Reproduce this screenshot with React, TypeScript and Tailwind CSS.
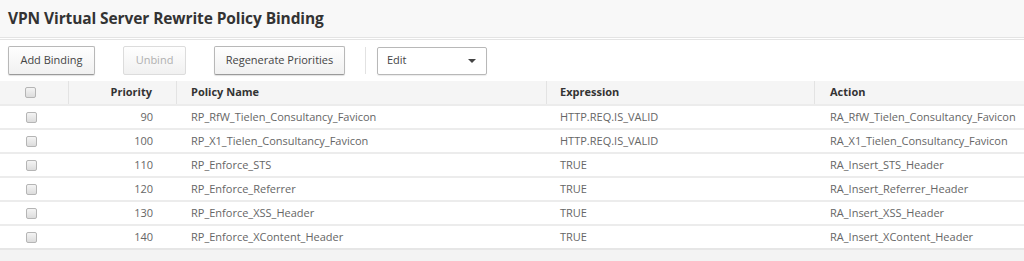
import React from "react";

const rows = [
  ["90", "RP_RfW_Tielen_Consultancy_Favicon", "HTTP.REQ.IS_VALID", "RA_RfW_Tielen_Consultancy_Favicon"],
  ["100", "RP_X1_Tielen_Consultancy_Favicon", "HTTP.REQ.IS_VALID", "RA_X1_Tielen_Consultancy_Favicon"],
  ["110", "RP_Enforce_STS", "TRUE", "RA_Insert_STS_Header"],
  ["120", "RP_Enforce_Referrer", "TRUE", "RA_Insert_Referrer_Header"],
  ["130", "RP_Enforce_XSS_Header", "TRUE", "RA_Insert_XSS_Header"],
  ["140", "RP_Enforce_XContent_Header", "TRUE", "RA_Insert_XContent_Header"],
];

const Check = () => (
  <span className="block w-[11px] h-[11px] rounded-[2px] border border-[#b5b5b5] bg-gradient-to-b from-[#f4f4f4] to-[#dcdcdc]" />
);

const Btn = ({ children, disabled, w }: { children: React.ReactNode; disabled?: boolean; w: string }) => (
  <button
    className={
      "h-[29px] rounded-[2px] border text-[11px] whitespace-nowrap bg-gradient-to-b from-[#fefefe] to-[#f1f1f1] " +
      w +
      (disabled
        ? " border-[#dcdcdc] text-[#b0b0b0]"
        : " border-[#b8b8b8] border-b-[#9a9a9a] text-[#444] shadow-[0_1px_1px_rgba(0,0,0,0.12)]")
    }
  >
    {children}
  </button>
);

const grid = "grid grid-cols-[69px_108px_370px_268px_1fr]";

export default function App() {
  return (
    <div className="w-[1024px] h-[261px] bg-white overflow-hidden" style={{ fontFamily: "'Open Sans', 'Liberation Sans', sans-serif" }}>
      <div className="h-[38px] bg-[#f8f8f8] border-b border-[#e4e4e4] flex items-center px-[8px]">
        <h1 className="text-[15.5px] font-bold text-[#333] tracking-[-0.1px]">VPN Virtual Server Rewrite Policy Binding</h1>
      </div>
      <div className="border-t border-[#e4e4e4] mt-[1px] h-[42px] flex items-center pl-[8px]">
        <Btn w="w-[87px]">Add Binding</Btn>
        <div className="ml-[28px] flex"><Btn disabled w="w-[63px]">Unbind</Btn></div>
        <div className="ml-[28px] flex"><Btn w="w-[131px]">Regenerate Priorities</Btn></div>
        <div className="ml-[20px] w-px h-[27px] bg-[#e2e2e2]" />
        <div className="ml-[11px] w-[110px] h-[28px] border border-[#b8b8b8] rounded-[2px] flex items-center justify-between pl-[9px] pr-[10px] text-[11px] text-[#444] shadow-[0_1px_1px_rgba(0,0,0,0.08)]">
          <span>Edit</span>
          <svg width="8" height="4" viewBox="0 0 8 4"><path d="M0 0h8L4 4z" fill="#444" /></svg>
        </div>
      </div>
      <div className={grid + " h-[23px] bg-[#f5f5f5] text-[11px] font-bold text-[#333] items-center"}>
        <div className="flex justify-center pr-[7px] h-full items-center border-r border-[#e3e3e3]"><Check /></div>
        <div className="text-right pr-[24px] h-full flex items-center justify-end border-r border-[#e3e3e3]">Priority</div>
        <div className="pl-[14px] h-full flex items-center border-r border-[#e3e3e3]">Policy Name</div>
        <div className="pl-[13px] h-full flex items-center border-r border-[#e3e3e3]">Expression</div>
        <div className="pl-[15px] h-full flex items-center">Action</div>
      </div>
      {rows.map((r) => (
        <div key={r[0]} className={grid + " h-[24px] border-t-2 border-[#ececec] text-[11px] text-[#666] items-center whitespace-nowrap"}>
          <div className="flex justify-center pr-[7px]"><Check /></div>
          <div className="text-right pr-[24px]">{r[0]}</div>
          <div className="pl-[14px]">{r[1]}</div>
          <div className="pl-[13px]">{r[2]}</div>
          <div className="pl-[15px]">{r[3]}</div>
        </div>
      ))}
      <div className="border-t-2 border-[#e6e6e6] h-[20px] bg-[#f3f3f3]" />
    </div>
  );
}
